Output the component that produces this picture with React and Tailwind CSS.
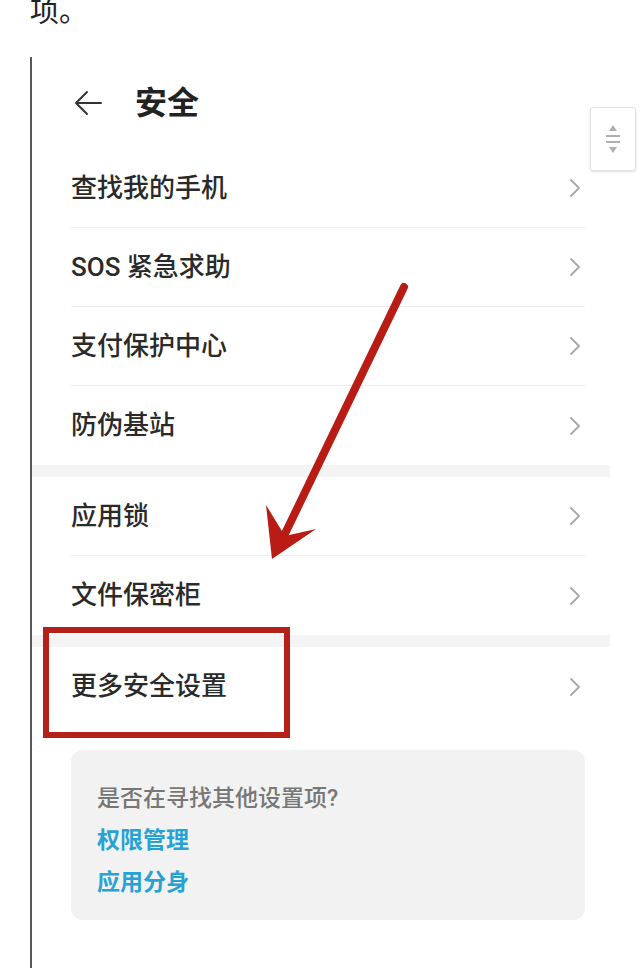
import React from "react";

const font = { fontFamily: 'Roboto, "Noto Sans CJK SC", sans-serif' };

const Chevron = () => (
  <svg width="14" height="24" viewBox="0 0 14 24" fill="none">
    <polyline points="3,4 11,12 3,20" stroke="#a8a8a8" strokeWidth="1.8" strokeLinecap="round" strokeLinejoin="round" />
  </svg>
);

function Row({ label, last }) {
  return (
    <div className="pl-[39px] pr-[25px]">
      <div className={`h-[79px] flex items-center justify-between ${last ? "" : "border-b border-[#ececec]"}`}>
        <span className="text-[26px] font-medium text-[#2a2a2a]">{label}</span>
        <span className="mr-[3px]">
          <Chevron />
        </span>
      </div>
    </div>
  );
}

function ScrollWidget() {
  return (
    <div className="absolute left-[590px] top-[107px] w-[46px] h-[64px] bg-white border border-[#e2e2e2] rounded-[3px] shadow-sm flex flex-col items-center justify-center gap-[4px]">
      <svg width="8" height="6" viewBox="0 0 8 6"><polygon points="4,0 8,6 0,6" fill="#b0b0b0" /></svg>
      <div className="w-[14px] h-[2px] bg-[#b0b0b0]" />
      <div className="w-[14px] h-[2px] bg-[#b0b0b0]" />
      <svg width="8" height="6" viewBox="0 0 8 6"><polygon points="0,0 8,0 4,6" fill="#b0b0b0" /></svg>
    </div>
  );
}

export default function App() {
  return (
    <div className="relative w-[640px] h-[968px] bg-white overflow-hidden" style={font}>
      <div className="pl-[30px] text-[29px] leading-[30px] -mt-[3px] text-[#222]">项。</div>

      <div className="ml-[30px] mt-[30px] border-l-2 border-[#5a5a5a] h-[911px]">
        <div className="w-[578px]">
          {/* header */}
          <div className="h-[92px] pl-[42px] flex items-center gap-[33px]">
            <svg width="28" height="26" viewBox="0 0 28 26" fill="none">
              <path d="M27 13H2M13 2L2 13l11 11" stroke="#333" strokeWidth="2" strokeLinecap="round" strokeLinejoin="round" />
            </svg>
            <span className="text-[32px] font-bold text-[#222]">安全</span>
          </div>

          <Row label="查找我的手机" />
          <Row label="SOS 紧急求助" />
          <Row label="支付保护中心" />
          <Row label="防伪基站" last />
          <div className="h-[12px] bg-[#f4f4f4]" />
          <Row label="应用锁" />
          <Row label="文件保密柜" last />
          <div className="h-[12px] bg-[#f4f4f4]" />
          <Row label="更多安全设置" last />

          <div className="mt-[24px] ml-[39px] mr-[25px] h-[170px] rounded-[12px] bg-[#f2f2f2] pl-[26px] pt-[34px] flex flex-col">
            <span className="text-[23px] leading-[30px] font-medium text-[#777]">是否在寻找其他设置项?</span>
            <span className="mt-[12px] text-[23px] leading-[30px] font-bold text-[#27a2d4]">权限管理</span>
            <span className="mt-[12px] text-[23px] leading-[30px] font-bold text-[#27a2d4]">应用分身</span>
          </div>
        </div>
      </div>

      <ScrollWidget />

      {/* red highlight box */}
      <div className="absolute left-[43px] top-[627px] w-[247px] h-[111px] border-[6px] border-[#b5201a]" />

      {/* red arrow */}
      <svg className="absolute inset-0 pointer-events-none" width="640" height="968" viewBox="0 0 640 968">
        <line x1="404" y1="287" x2="281" y2="542" stroke="#b81c15" strokeWidth="8" strokeLinecap="round" />
        <polygon points="272,559 266,505 285,536 316,529" fill="#b81c15" />
      </svg>
    </div>
  );
}
